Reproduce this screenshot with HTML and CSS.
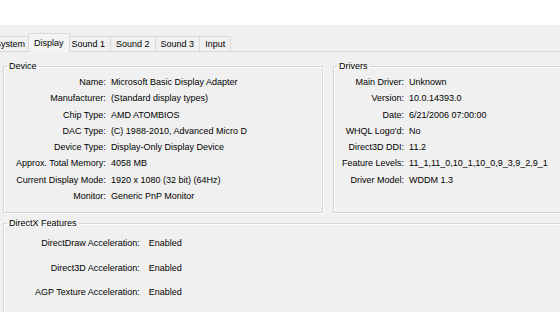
FILE: index.html
```html
<!DOCTYPE html>
<html lang="en">
<head>
  <meta charset="UTF-8" />
  <title>DirectX Diagnostic Tool - Display</title>
  <link rel="stylesheet" href="styles.css">
</head>
<body>
  <div class="window">
    <div class="tabs">
      <div class="tab">System</div>
      <div class="tab active">Display</div>
      <div class="tab">Sound 1</div>
      <div class="tab">Sound 2</div>
      <div class="tab">Sound 3</div>
      <div class="tab">Input</div>
    </div>

    <div class="page">
      <div class="top-groups">
        <fieldset class="group device">
          <legend>Device</legend>
          <dl class="props">
            <dt>Name:</dt><dd>Microsoft Basic Display Adapter</dd>
            <dt>Manufacturer:</dt><dd>(Standard display types)</dd>
            <dt>Chip Type:</dt><dd>AMD ATOMBIOS</dd>
            <dt>DAC Type:</dt><dd>(C) 1988-2010, Advanced Micro D</dd>
            <dt>Device Type:</dt><dd>Display-Only Display Device</dd>
            <dt>Approx. Total Memory:</dt><dd>4058 MB</dd>
            <dt>Current Display Mode:</dt><dd>1920 x 1080 (32 bit) (64Hz)</dd>
            <dt>Monitor:</dt><dd>Generic PnP Monitor</dd>
          </dl>
        </fieldset>

        <fieldset class="group drivers">
          <legend>Drivers</legend>
          <dl class="props">
            <dt>Main Driver:</dt><dd>Unknown</dd>
            <dt>Version:</dt><dd>10.0.14393.0</dd>
            <dt>Date:</dt><dd>6/21/2006 07:00:00</dd>
            <dt>WHQL Logo'd:</dt><dd>No</dd>
            <dt>Direct3D DDI:</dt><dd>11.2</dd>
            <dt>Feature Levels:</dt><dd>11_1,11_0,10_1,10_0,9_3,9_2,9_1</dd>
            <dt>Driver Model:</dt><dd>WDDM 1.3</dd>
          </dl>
        </fieldset>
      </div>

      <fieldset class="group features">
        <legend>DirectX Features</legend>
        <dl class="props wide">
          <dt>DirectDraw Acceleration:</dt><dd>Enabled</dd>
          <dt>Direct3D Acceleration:</dt><dd>Enabled</dd>
          <dt>AGP Texture Acceleration:</dt><dd>Enabled</dd>
        </dl>
      </fieldset>
    </div>
  </div>
</body>
</html>
```

FILE: styles.css
```css
body {
  margin: 0;
  padding-top: 25px;
  background-color: #fff;
  font-family: 'Liberation Sans', Arial, sans-serif;
  font-size: 9px;
  color: #000;
}
.window {
  height: 287px;
  background-color: #f0f0f0;
  overflow: hidden;
}

/* tab strip */
.tabs {
  display: flex;
  align-items: flex-end;
  height: 26px;
  margin-left: -10px;
}
.tab {
  height: 14px;
  line-height: 14px;
  padding: 0 5px;
  border: 1px solid #d9d9d9;
  border-bottom: none;
  margin-left: -1px;
  background-color: #f0f0f0;
}
.tab.active {
  position: relative;
  z-index: 1;
  height: 18px;
  line-height: 18px;
  margin: 0 -3px -1px -3px;
  padding: 0 5px;
  background-color: #f4f4f4;
}

.page {
  border-top: 1px solid #d9d9d9;
}
.top-groups {
  display: flex;
  gap: 10px;
  padding: 9px 0 0 3px;
}

/* group boxes */
.group {
  margin: 0;
  padding: 0;
  min-width: 0;
  border: 1px solid #d6d6d6;
  box-shadow: inset 1px 1px 0 #fff, 1px 1px 0 #fff;
}
.group legend {
  margin-left: 3px;
  padding: 0 2px;
  line-height: 11px;
}
.device {
  flex: none;
  width: 318px;
}
.drivers {
  flex: none;
  width: 318px;
}
.features {
  margin: 5px -10px 0 3px;
  height: 120px;
}

/* label / value rows */
.props {
  display: grid;
  grid-template-columns: max-content 1fr;
  grid-auto-rows: 16.3px;
  line-height: 16.3px;
  column-gap: 5px;
  margin: 2px 0 8px;
  padding-left: 12px;
}
.drivers .props {
  padding-left: 8px;
}
.props dt {
  text-align: right;
  white-space: nowrap;
}
.props dd {
  margin: 0;
  white-space: nowrap;
}
.props.wide {
  grid-auto-rows: 24.5px;
  line-height: 24.5px;
  column-gap: 9px;
  padding-left: 31px;
}
```
